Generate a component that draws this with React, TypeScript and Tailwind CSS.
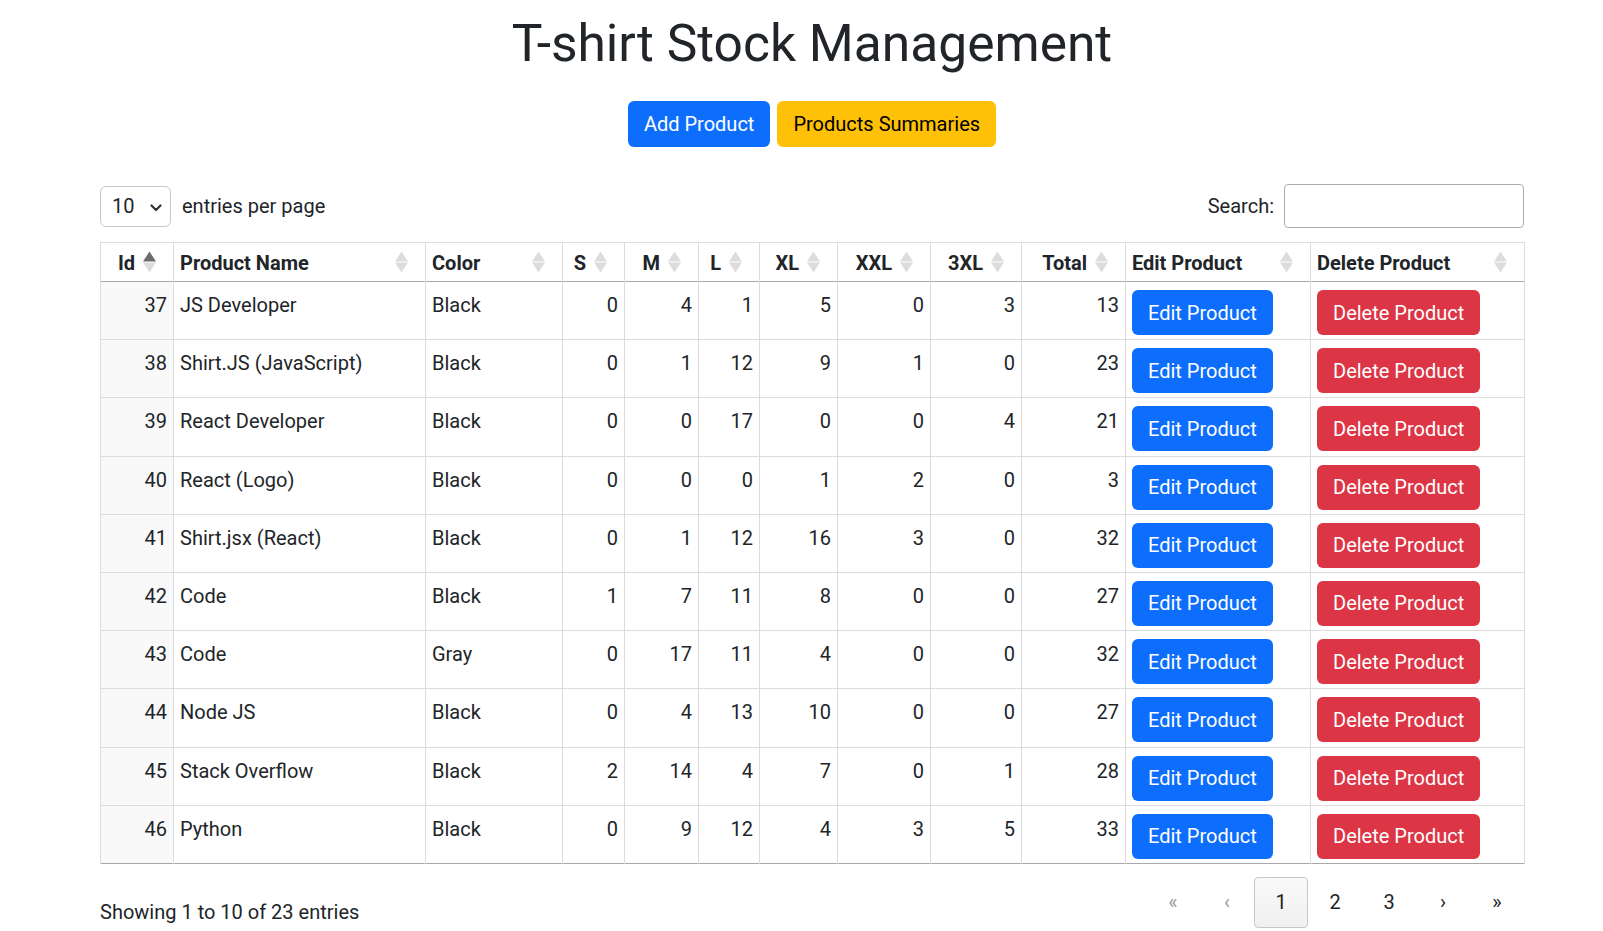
import { useState } from 'react'

type Row = {
  id: number
  name: string
  color: string
  s: number
  m: number
  l: number
  xl: number
  xxl: number
  x3: number
}

const rows: Row[] = [
  { id: 37, name: 'JS Developer', color: 'Black', s: 0, m: 4, l: 1, xl: 5, xxl: 0, x3: 3 },
  { id: 38, name: 'Shirt.JS (JavaScript)', color: 'Black', s: 0, m: 1, l: 12, xl: 9, xxl: 1, x3: 0 },
  { id: 39, name: 'React Developer', color: 'Black', s: 0, m: 0, l: 17, xl: 0, xxl: 0, x3: 4 },
  { id: 40, name: 'React (Logo)', color: 'Black', s: 0, m: 0, l: 0, xl: 1, xxl: 2, x3: 0 },
  { id: 41, name: 'Shirt.jsx (React)', color: 'Black', s: 0, m: 1, l: 12, xl: 16, xxl: 3, x3: 0 },
  { id: 42, name: 'Code', color: 'Black', s: 1, m: 7, l: 11, xl: 8, xxl: 0, x3: 0 },
  { id: 43, name: 'Code', color: 'Gray', s: 0, m: 17, l: 11, xl: 4, xxl: 0, x3: 0 },
  { id: 44, name: 'Node JS', color: 'Black', s: 0, m: 4, l: 13, xl: 10, xxl: 0, x3: 0 },
  { id: 45, name: 'Stack Overflow', color: 'Black', s: 2, m: 14, l: 4, xl: 7, xxl: 0, x3: 1 },
  { id: 46, name: 'Python', color: 'Black', s: 0, m: 9, l: 12, xl: 4, xxl: 3, x3: 5 },
]

const columns = [
  { label: 'Id', width: 73, numeric: true },
  { label: 'Product Name', width: 252, numeric: false },
  { label: 'Color', width: 137, numeric: false },
  { label: 'S', width: 62, numeric: true },
  { label: 'M', width: 74, numeric: true },
  { label: 'L', width: 61, numeric: true },
  { label: 'XL', width: 78, numeric: true },
  { label: 'XXL', width: 93, numeric: true },
  { label: '3XL', width: 91, numeric: true },
  { label: 'Total', width: 104, numeric: true },
  { label: 'Edit Product', width: 185, numeric: false },
  { label: 'Delete Product', width: 214, numeric: false },
]

function SortIcon({ active }: { active?: boolean }) {
  return (
    <svg width="13" height="21" viewBox="0 0 13 21" className="absolute right-[17px] top-1/2 -translate-y-1/2">
      <polygon points="6.5,0 13,10 0,10" fill={active ? '#6b6b6b' : '#dcdcdc'} />
      <polygon points="0,11 13,11 6.5,21" fill="#dcdcdc" />
    </svg>
  )
}

export default function App() {
  const [search, setSearch] = useState('')

  const num = 'px-[6px] pt-[8px] text-right align-top'
  const txt = 'px-[6px] pt-[8px] text-left align-top'

  return (
    <div className="min-h-screen bg-white text-[#212529] font-['Roboto','Noto_Sans',sans-serif] text-[20px] leading-[30px]">
      <div className="ml-[100px] w-[1424px]">
        <h1 className="mt-[10px] text-center text-[51.5px] font-normal leading-[67px]">T-shirt Stock Management</h1>

        <div className="mt-[24px] flex justify-center gap-[7px]">
          <button className="h-[46px] rounded-[6px] bg-[#0d6efd] px-4 text-white">Add Product</button>
          <button className="h-[46px] rounded-[6px] bg-[#ffc107] px-4 text-black">Products Summaries</button>
        </div>

        <div className="mt-[37px] flex h-[44px] items-center justify-between">
          <div className="flex items-center gap-[11px]">
            <div className="relative flex h-[41px] w-[71px] items-center rounded-[6px] border border-[#c8c8c8] pl-[11px]">
              <span>10</span>
              <svg width="12" height="8" viewBox="0 0 12 8" className="absolute right-[8px] top-[17px]">
                <path d="M1.5 1.5 L6 6 L10.5 1.5" stroke="#333" strokeWidth="2.2" fill="none" strokeLinecap="round" strokeLinejoin="round" />
              </svg>
            </div>
            <span>entries per page</span>
          </div>
          <div className="flex items-center gap-[10px]">
            <span>Search:</span>
            <input
              value={search}
              onChange={(e) => setSearch(e.target.value)}
              className="h-[44px] w-[240px] rounded-[4px] border border-[#aaa] px-2 outline-none"
            />
          </div>
        </div>

        <table className="mt-[14px] w-[1424px] table-fixed border-collapse border-x border-t border-[#dcdcdc]">
          <colgroup>
            {columns.map((c) => (
              <col key={c.label} style={{ width: c.width }} />
            ))}
          </colgroup>
          <thead>
            <tr className="h-[39px] border-b border-[#a8a8a8]">
              {columns.map((c, i) => (
                <th
                  key={c.label}
                  className={
                    'relative border-x border-[#dcdcdc] pt-[2px] font-bold ' +
                    (c.numeric ? 'pl-[6px] pr-[38px] text-right' : 'pl-[6px] pr-[38px] text-left')
                  }
                >
                  {c.label}
                  <SortIcon active={i === 0} />
                </th>
              ))}
            </tr>
          </thead>
          <tbody>
            {rows.map((r) => (
              <tr key={r.id} className="h-[58.2px] border-b border-[#dcdcdc] last:border-[#a8a8a8]">
                <td className={num + ' border-x border-[#dcdcdc] bg-[#f9f9f9]'}>{r.id}</td>
                <td className={txt + ' border-x border-[#dcdcdc]'}>{r.name}</td>
                <td className={txt + ' border-x border-[#dcdcdc]'}>{r.color}</td>
                <td className={num + ' border-x border-[#dcdcdc]'}>{r.s}</td>
                <td className={num + ' border-x border-[#dcdcdc]'}>{r.m}</td>
                <td className={num + ' border-x border-[#dcdcdc]'}>{r.l}</td>
                <td className={num + ' border-x border-[#dcdcdc]'}>{r.xl}</td>
                <td className={num + ' border-x border-[#dcdcdc]'}>{r.xxl}</td>
                <td className={num + ' border-x border-[#dcdcdc]'}>{r.x3}</td>
                <td className={num + ' border-x border-[#dcdcdc]'}>{r.s + r.m + r.l + r.xl + r.xxl + r.x3}</td>
                <td className={txt + ' border-x border-[#dcdcdc] px-[5px]'}>
                  <button className="h-[45px] rounded-[6px] bg-[#0d6efd] px-4 text-white">Edit Product</button>
                </td>
                <td className={txt + ' border-x border-[#dcdcdc] px-[5px]'}>
                  <button className="h-[45px] rounded-[6px] bg-[#dc3545] px-4 text-white">Delete Product</button>
                </td>
              </tr>
            ))}
          </tbody>
        </table>

        <div className="mt-[13px] flex items-end justify-between">
          <span className="mb-[1px]">Showing 1 to 10 of 23 entries</span>
          <div className="flex">
            <span className="flex h-[51px] w-[54px] items-center justify-center text-[#999]">«</span>
            <span className="flex h-[51px] w-[54px] items-center justify-center text-[#999]">‹</span>
            <span className="flex h-[51px] w-[54px] items-center justify-center rounded-[4px] border border-[#c8c8c8] bg-gradient-to-b from-[#fafafa] to-[#f0f0f0]">1</span>
            <span className="flex h-[51px] w-[54px] items-center justify-center">2</span>
            <span className="flex h-[51px] w-[54px] items-center justify-center">3</span>
            <span className="flex h-[51px] w-[54px] items-center justify-center">›</span>
            <span className="flex h-[51px] w-[54px] items-center justify-center">»</span>
          </div>
        </div>
      </div>
    </div>
  )
}
